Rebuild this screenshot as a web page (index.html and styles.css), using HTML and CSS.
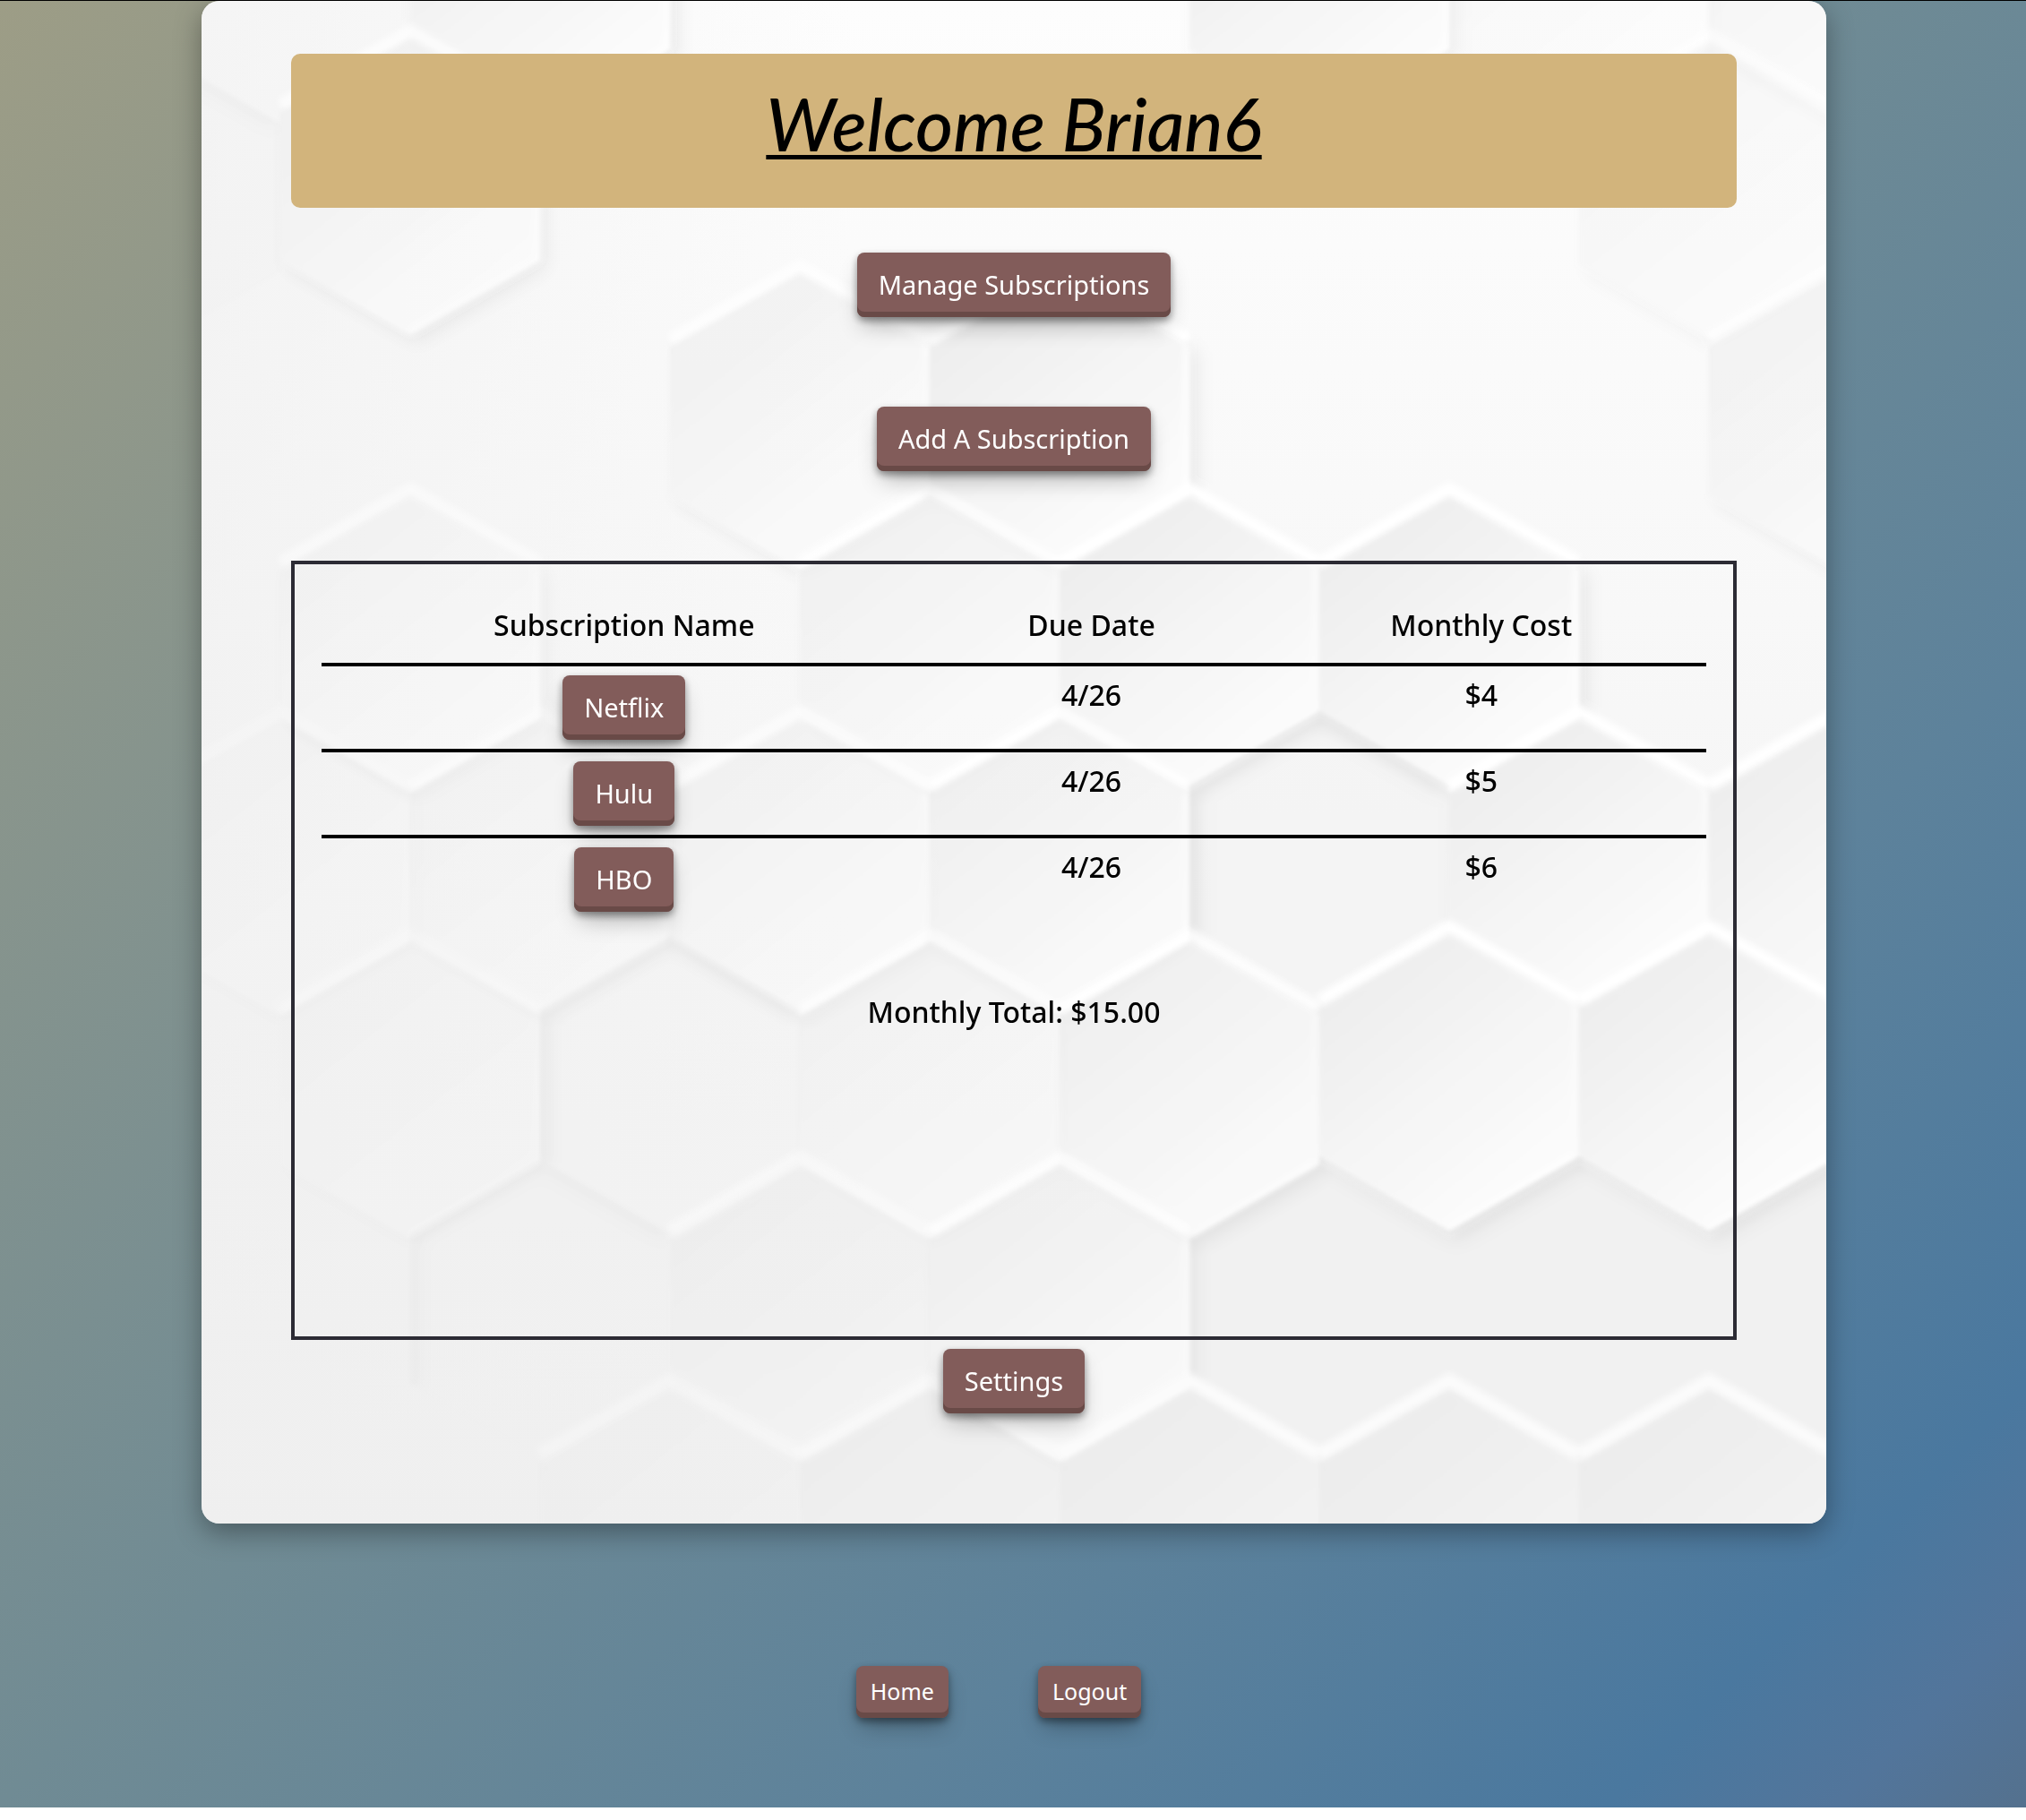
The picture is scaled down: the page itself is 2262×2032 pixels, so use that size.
FILE: index.html
```html
<!DOCTYPE html>
<html lang="en">
<head>
<meta charset="utf-8">
<meta name="viewport" content="width=device-width, initial-scale=1">
<title>Subscriptions</title>
<link rel="stylesheet" href="styles.css">
</head>
<body>
<div class="page">
  <main class="card">
    <svg class="card-pattern" viewBox="224 1 1814 1700" preserveAspectRatio="xMidYMid slice" aria-hidden="true">
      <defs>
        <linearGradient id="base" x1="0" y1="0" x2="0" y2="1">
          <stop offset="0" stop-color="#fdfdfd"/>
          <stop offset="0.4" stop-color="#f8f8f8"/>
          <stop offset="1" stop-color="#efefef"/>
        </linearGradient>
        <linearGradient id="edge" x1="0" y1="0" x2="1" y2="0">
          <stop offset="0" stop-color="#efefef"/>
          <stop offset="0.4" stop-color="#efefef" stop-opacity="0"/>
        </linearGradient>
        <linearGradient id="face" gradientUnits="userSpaceOnUse" x1="-100" y1="50" x2="90" y2="290">
          <stop offset="0" stop-color="#eeeeee"/>
          <stop offset="1" stop-color="#fcfcfc"/>
        </linearGradient>
        <linearGradient id="low" gradientUnits="userSpaceOnUse" x1="-100" y1="50" x2="90" y2="290">
          <stop offset="0" stop-color="#ececec"/>
          <stop offset="1" stop-color="#f5f5f5"/>
        </linearGradient>
        <filter id="soft" x="-20%" y="-20%" width="140%" height="140%"><feGaussianBlur stdDeviation="10"/></filter>
        <filter id="line" x="-20%" y="-20%" width="140%" height="140%"><feGaussianBlur stdDeviation="3"/></filter>
        <filter id="haze" filterUnits="userSpaceOnUse" x="200" y="-30" width="1870" height="1760"><feGaussianBlur stdDeviation="2"/></filter>
        <clipPath id="cell"><path d="M0 0 145 83V249L0 332-145 249V83Z"/></clipPath>
        <g id="up">
          <path d="M8 12 153 90V258L8 342-137 258V90Z" fill="#000" fill-opacity="0.08" filter="url(#soft)"/>
          <path d="M0 0 145 83V249L0 332-145 249V83Z" fill="url(#face)"/>
          <path d="M-145 75 0-8 145 75" fill="none" stroke="#fff" stroke-width="13" filter="url(#line)"/>
          <path d="M141 83V247L0 328" fill="none" stroke="#fff" stroke-width="5" filter="url(#line)"/>
        </g>
        <g id="foot">
          <path d="M0 0 145 83V249L0 332-145 249V83Z" fill="url(#low)"/>
          <path d="M-145 75 0-8 145 75" fill="none" stroke="#fbfbfb" stroke-width="15" filter="url(#line)"/>
        </g>
        <g id="down" clip-path="url(#cell)">
          <path d="M0 0 145 83V249L0 332-145 249V83Z" fill="#f4f4f4" fill-opacity="0.7"/>
          <path d="M-145 260V83L0 0 145 83" fill="none" stroke="#000" stroke-opacity="0.06" stroke-width="24" filter="url(#soft)"/>
        </g>
        <g id="floor" clip-path="url(#cell)">
          <path d="M0 0 145 83V249L0 332-145 249V83Z" fill="#f1f1f1"/>
        </g>
      </defs>
      <rect x="224" y="1" width="1814" height="1700" fill="url(#base)"/>
      <rect x="224" y="1" width="1814" height="1700" fill="url(#edge)" opacity="0.6"/>
      <g filter="url(#haze)">
        <use href="#up" x="602" y="-194"/>
        <use href="#up" x="1472" y="-194"/>
        <use href="#up" x="1762" y="-194" opacity="0.4"/>
        <use href="#up" x="2052" y="-194" opacity="0.6"/>
        <use href="#down" x="167" y="55" opacity="0.4"/>
        <use href="#up" x="457" y="42" opacity="0.7"/>
        <use href="#up" x="1907" y="46" opacity="0.5"/>
        <use href="#up" x="892" y="304" opacity="0.7"/>
        <use href="#up" x="1182" y="304"/>
        <use href="#up" x="2052" y="304" opacity="0.7"/>
        <use href="#up" x="457" y="553" opacity="0.5"/>
        <use href="#up" x="1037" y="553" opacity="0.7"/>
        <use href="#up" x="1327" y="553"/>
        <use href="#up" x="1617" y="553"/>
        <use href="#up" x="312" y="802" opacity="0.2"/>
        <use href="#up" x="602" y="802" opacity="0.35"/>
        <use href="#up" x="892" y="802" opacity="0.6"/>
        <use href="#up" x="1182" y="802" opacity="0.8"/>
        <use href="#down" x="1472" y="794"/>
        <use href="#up" x="1762" y="802"/>
        <use href="#up" x="2052" y="802"/>
        <use href="#floor" x="1472" y="1300"/>
        <use href="#floor" x="1762" y="1300"/>
        <use href="#floor" x="2052" y="1300"/>
        <use href="#up" x="457" y="1051" opacity="0.2"/>
        <use href="#down" x="747" y="1045" opacity="0.6"/>
        <use href="#up" x="1037" y="1051" opacity="0.5"/>
        <use href="#up" x="1327" y="1051" opacity="0.8"/>
        <use href="#up" x="1617" y="1042"/>
        <use href="#up" x="1907" y="1042"/>
        <use href="#down" x="602" y="1295" opacity="0.4"/>
        <use href="#foot" x="892" y="1300" opacity="0.6"/>
        <use href="#up" x="1182" y="1300" opacity="0.7"/>
        <use href="#foot" x="747" y="1549" opacity="0.4"/>
        <use href="#foot" x="1037" y="1549" opacity="0.6"/>
        <use href="#foot" x="1327" y="1549"/>
        <use href="#foot" x="1617" y="1549"/>
        <use href="#foot" x="1907" y="1549"/>
      </g>
    </svg>

    <header class="banner">
      <h1 class="banner-title">Welcome Brian6</h1>
    </header>

    <div class="actions">
      <button type="button" class="btn">Manage Subscriptions</button>
      <button type="button" class="btn">Add A Subscription</button>
    </div>

    <section class="panel">
      <table class="subs">
        <colgroup>
          <col class="col-name">
          <col class="col-date">
          <col class="col-cost">
        </colgroup>
        <thead>
          <tr><th scope="col">Subscription Name</th><th scope="col">Due Date</th><th scope="col">Monthly Cost</th></tr>
        </thead>
        <tbody>
          <tr><td><button type="button" class="btn">Netflix</button></td><td>4/26</td><td>$4</td></tr>
          <tr><td><button type="button" class="btn">Hulu</button></td><td>4/26</td><td>$5</td></tr>
          <tr><td><button type="button" class="btn">HBO</button></td><td>4/26</td><td>$6</td></tr>
        </tbody>
      </table>
      <p class="total">Monthly Total: $15.00</p>
    </section>

    <button type="button" class="btn">Settings</button>
  </main>

  <nav class="footer-nav">
    <button type="button" class="btn btn-small">Home</button>
    <button type="button" class="btn btn-small">Logout</button>
  </nav>
</div>
</body>
</html>
```

FILE: styles.css
```css
* {
  box-sizing: border-box;
}

body {
  margin: 0;
  background: #fff;
  color: #000;
  font-family: "Noto Sans", sans-serif;
}

.page {
  padding: 0 223px 100px 225px;
  border-top: 1px solid #000;
  background: linear-gradient(135deg, #9d9d86 0%, #708b94 47%, #5d829b 70%, #4a789f 89%, #52759b 95%, #54718e 100%);
}

.card {
  position: relative;
  display: flex;
  flex-direction: column;
  align-items: center;
  padding: 59px 100px 123px;
  overflow: hidden;
  border-radius: 20px;
  box-shadow: 0 10px 30px rgba(0, 0, 0, 0.35);
  isolation: isolate;
}

/* Honeycomb artwork behind the card's content */
.card-pattern {
  position: absolute;
  inset: 0;
  z-index: -1;
  width: 100%;
  height: 100%;
}

.banner {
  align-self: stretch;
  padding: 30px 24px 46px;
  border-radius: 10px;
  background: #d2b47c;
  text-align: center;
}

.banner-title {
  margin: 0;
  font-family: Lato, sans-serif;
  font-size: 81px;
  font-style: italic;
  font-weight: 500;
  line-height: 96px;
  text-decoration: underline;
  text-decoration-thickness: 5px;
  text-underline-offset: 4px;
  text-decoration-skip-ink: none;
}

.actions {
  display: flex;
  flex-direction: column;
  align-items: center;
  gap: 100px;
  margin: 50px 0 100px;
}

.btn {
  height: 72px;
  padding: 0 24px 2px;
  border: 0;
  border-radius: 8px;
  background: #825c5a;
  box-shadow: 0 4px 8px rgba(0, 0, 0, 0.4), 0 14px 26px -6px rgba(0, 0, 0, 0.3), inset 0 -6px 0 #694a47;
  color: #fff;
  font-family: "Noto Sans", sans-serif;
  font-size: 29px;
  font-weight: 400;
  white-space: nowrap;
  cursor: pointer;
}

.btn-small {
  height: 58px;
  padding: 0 16px 2px;
  font-size: 25px;
}

.panel {
  align-self: stretch;
  min-height: 870px;
  margin-bottom: 10px;
  padding: 30px;
  border: 4px solid #2c2b34;
}

.subs {
  width: 100%;
  table-layout: fixed;
  border-spacing: 0;
  font-size: 32px;
  font-weight: 500;
  line-height: 44px;
  text-align: center;
}

.col-name {
  width: 43.7%;
}

.col-date {
  width: 23.8%;
}

.col-cost {
  width: 32.5%;
}

.subs th {
  padding: 16px 0 20px;
  font-weight: 500;
}

.subs td {
  padding: 10px 0;
  border-top: 4px solid #000;
  vertical-align: top;
}

.subs .btn {
  display: block;
  margin: 0 auto;
}

.total {
  margin: 80px 0 0;
  font-size: 32px;
  font-weight: 500;
  line-height: 44px;
  text-align: center;
}

.footer-nav {
  display: flex;
  justify-content: center;
  gap: 100px;
  padding: 159px 34px 0 0;
}
```
